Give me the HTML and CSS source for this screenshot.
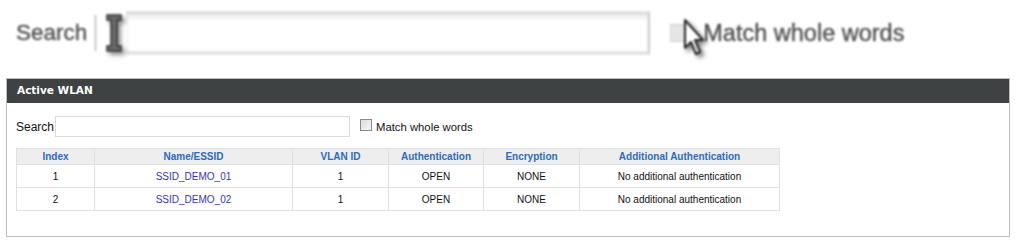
FILE: index.html
```html
<!DOCTYPE html>
<html>
<head>
<meta charset="utf-8">
<link rel="stylesheet" href="styles.css">
</head>
<body>
<div class="shot">
  <div class="shot-inner">
    <span class="shot-label">Search</span>
    <span class="shot-caret"></span>
    <svg class="ibeam" width="18" height="40" viewBox="0 0 18 40">
      <path d="M2 2 H16 V7 H12 V33 H16 V38 H2 V33 H6 V7 H2 Z" fill="#6a6a6a" stroke="#333" stroke-width="1.5"/>
    </svg>
    <div class="shot-input"></div>
    <div class="shot-check">
      <span class="shot-box"></span>
      <svg class="arrow" width="22" height="40" viewBox="0 0 22 40">
        <path d="M2 2 V30 L8 24 L13 36 L17 34 L12 22 L20 22 Z" fill="#fff" stroke="#222" stroke-width="2" stroke-linejoin="round"/>
      </svg>
      <span class="shot-text">Match whole words</span>
    </div>
  </div>
</div>

<div class="panel">
  <div class="panel-head">Active WLAN</div>
  <div class="panel-body">
    <div class="search-row">
      <label class="search-label">Search</label>
      <input class="search-input" type="text">
      <label class="match"><input type="checkbox" class="cb"><span>Match whole words</span></label>
    </div>
    <table class="wlan">
      <colgroup>
        <col class="c-idx">
        <col class="c-name">
        <col class="c-vlan">
        <col class="c-auth">
        <col class="c-enc">
        <col class="c-add">
      </colgroup>
      <thead>
        <tr>
          <th>Index</th>
          <th>Name/ESSID</th>
          <th>VLAN ID</th>
          <th>Authentication</th>
          <th>Encryption</th>
          <th>Additional Authentication</th>
        </tr>
      </thead>
      <tbody>
        <tr>
          <td>1</td>
          <td><a class="ssid">SSID_DEMO_01</a></td>
          <td>1</td>
          <td>OPEN</td>
          <td>NONE</td>
          <td>No additional authentication</td>
        </tr>
        <tr>
          <td>2</td>
          <td><a class="ssid">SSID_DEMO_02</a></td>
          <td>1</td>
          <td>OPEN</td>
          <td>NONE</td>
          <td>No additional authentication</td>
        </tr>
      </tbody>
    </table>
  </div>
</div>
</body>
</html>
```

FILE: styles.css
```css
html, body {
  margin: 0;
  padding: 0;
  background: #fff;
}

body {
  font-family: "Liberation Sans", Arial, sans-serif;
}

/* enlarged blurry screenshot strip */
.shot {
  height: 78px;
  width: 910px;
}

.shot-inner {
  display: flex;
  align-items: center;
  height: 66px;
  padding-left: 16px;
  filter: blur(0.9px);
}

.shot-label {
  font-size: 22.5px;
  color: #4a4a4a;
  -webkit-text-stroke: 0.3px #4a4a4a;
}

.shot-caret {
  width: 1px;
  height: 36px;
  background: #999;
  margin-left: 8px;
}

.ibeam {
  margin-left: 9px;
  filter: drop-shadow(3px 3px 2px rgba(0,0,0,0.45));
}

.shot-input {
  width: 522px;
  height: 36px;
  margin-left: 3px;
  border-top: 4px solid #e2e2e2;
  border-bottom: 4px solid #e4e4e4;
  border-right: 2px solid #c8c8c8;
  box-shadow: inset 0 3px 4px rgba(0,0,0,0.08);
  background: #fff;
}

.shot-check {
  position: relative;
  display: flex;
  align-items: center;
  margin-left: 20px;
}

.shot-box {
  width: 17px;
  height: 16px;
  background: #e6e6e6;
  border: 1px solid #d0d0d0;
}

.arrow {
  position: absolute;
  left: 13px;
  top: -2px;
  filter: drop-shadow(3px 3px 2px rgba(0,0,0,0.5));
}

.shot-text {
  font-size: 23.5px;
  color: #4a4a4a;
  -webkit-text-stroke: 0.3px #4a4a4a;
  margin-left: 14px;
}

/* panel */
.panel {
  margin-left: 6px;
  width: 1002px;
  height: 157px;
  border: 1px solid #bdbdbd;
  background: #fff;
}

.panel-head {
  height: 24px;
  line-height: 22px;
  background: #3e4243;
  color: #fff;
  font-family: "DejaVu Sans", Verdana, sans-serif;
  font-weight: bold;
  font-size: 10.5px;
  padding-left: 10px;
}

.panel-body {
  padding: 13px 0 0 9px;
}

.search-row {
  display: flex;
  align-items: center;
  height: 21px;
}

.search-label {
  font-size: 12px;
  color: #111;
  width: 39px;
}

.search-input {
  width: 293px;
  height: 19px;
  margin: 0;
  padding: 0;
  border: 1px solid #dcdcdc;
  box-sizing: content-box;
}

.match {
  display: flex;
  align-items: center;
  margin-left: 10px;
  font-size: 11.3px;
  color: #111;
}

.cb {
  appearance: none;
  width: 12px;
  height: 12px;
  margin: 0 4px 4px 0;
  border: 1px solid #8a8a8a;
  background: linear-gradient(135deg, #dcdcdc, #f6f6f6);
  box-sizing: border-box;
}

.wlan {
  margin-top: 11px;
  border-collapse: collapse;
  width: 763px;
  font-size: 10px;
  table-layout: fixed;
}

.wlan th {
  background: #eeeeee;
  color: #2a6cc4;
  font-weight: bold;
  height: 15px;
  padding: 0;
  border: 1px solid #e0e0e0;
  font-size: 10px;
}

.wlan td {
  height: 22px;
  padding: 0;
  border: 1px solid #e0e0e0;
  text-align: center;
  color: #111;
}

.c-idx { width: 78px; }
.c-name { width: 198px; }
.c-vlan { width: 96px; }
.c-auth { width: 95px; }
.c-enc { width: 96px; }
.c-add { width: 200px; }

.ssid {
  color: #3434c8;
  text-decoration: none;
}
```
